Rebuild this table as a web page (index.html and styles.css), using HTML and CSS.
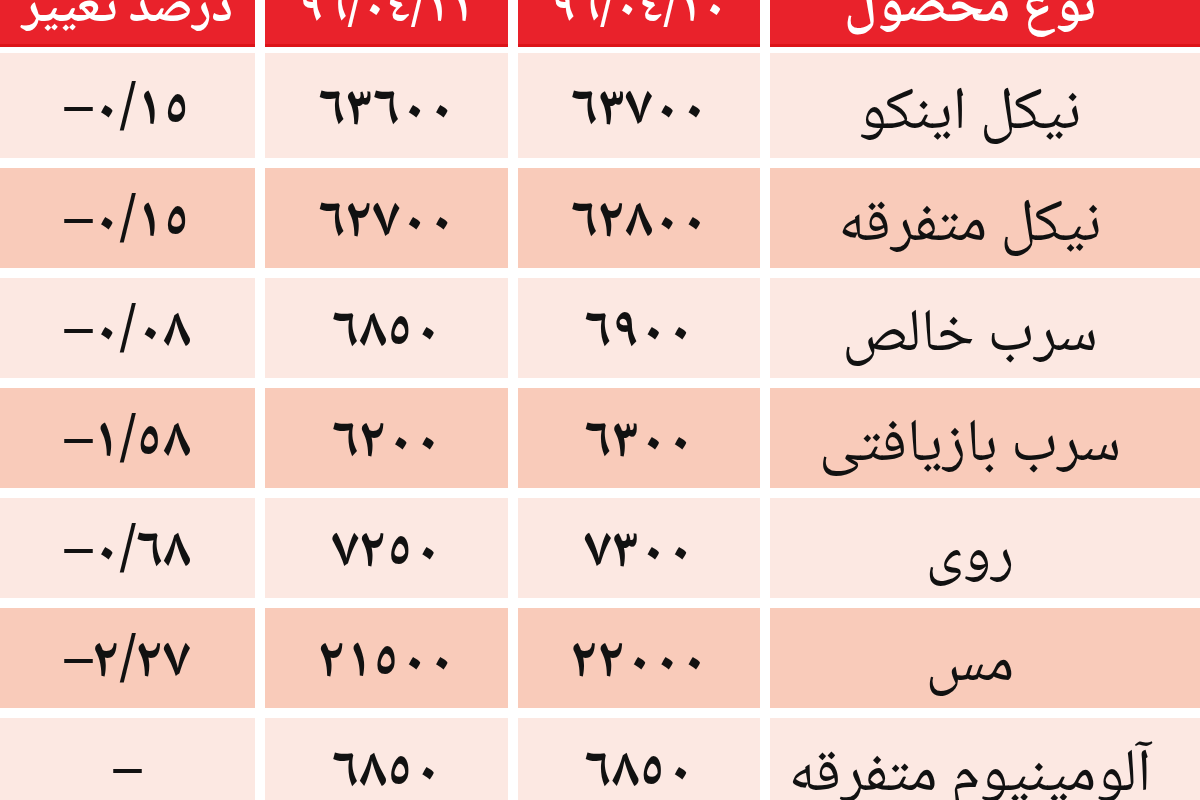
FILE: index.html
```html
<!DOCTYPE html>
<html lang="fa" dir="rtl">
<head>
<meta charset="utf-8">
<title>قیمت فلزات</title>
<link rel="stylesheet" href="styles.css">
</head>
<body>
<div class="table">
  <div class="row head">
    <div class="cell name">نوع محصول</div>
    <div class="cell num">٩٦/٠٤/١٠</div>
    <div class="cell num">٩٦/٠٤/١١</div>
    <div class="cell">درصد تغییر</div>
  </div>
  <div class="row light first">
    <div class="cell name">نیکل اینکو</div>
    <div class="cell num">٦٣٧٠٠</div>
    <div class="cell num">٦٣٦٠٠</div>
    <div class="cell num">–٠/١٥</div>
  </div>
  <div class="row dark">
    <div class="cell name">نیکل متفرقه</div>
    <div class="cell num">٦٢٨٠٠</div>
    <div class="cell num">٦٢٧٠٠</div>
    <div class="cell num">–٠/١٥</div>
  </div>
  <div class="row light">
    <div class="cell name">سرب خالص</div>
    <div class="cell num">٦٩٠٠</div>
    <div class="cell num">٦٨٥٠</div>
    <div class="cell num">–٠/٠٨</div>
  </div>
  <div class="row dark">
    <div class="cell name">سرب بازیافتی</div>
    <div class="cell num">٦٣٠٠</div>
    <div class="cell num">٦٢٠٠</div>
    <div class="cell num">–١/٥٨</div>
  </div>
  <div class="row light">
    <div class="cell name">روی</div>
    <div class="cell num">٧٣٠٠</div>
    <div class="cell num">٧٢٥٠</div>
    <div class="cell num">–٠/٦٨</div>
  </div>
  <div class="row dark">
    <div class="cell name">مس</div>
    <div class="cell num">٢٢٠٠٠</div>
    <div class="cell num">٢١٥٠٠</div>
    <div class="cell num">–٢/٢٧</div>
  </div>
  <div class="row light">
    <div class="cell name">آلومینیوم متفرقه</div>
    <div class="cell num">٦٨٥٠</div>
    <div class="cell num">٦٨٥٠</div>
    <div class="cell num">–</div>
  </div>
</div>
</body>
</html>
```
FILE: styles.css
```css
html, body {
  margin: 0;
  padding: 0;
  background: #ffffff;
}
body {
  width: 1200px;
  height: 800px;
  overflow: hidden;
  font-family: "Noto Naskh Arabic", "Noto Sans Arabic", "DejaVu Sans", sans-serif;
  color: #111111;
}
.table {
  display: flex;
  flex-direction: column;
  gap: 10px;
}
.row {
  display: grid;
  grid-template-columns: 430px 242px 243px 255px;
  column-gap: 10px;
  height: 100px;
}
.row.first {
  height: 105px;
}
.cell {
  display: flex;
  align-items: center;
  justify-content: center;
  font-size: 56px;
  line-height: 1;
  font-weight: bold;
  white-space: nowrap;
}
.cell.num {
  direction: ltr;
  padding-top: 12px;
}
.cell.name {
  padding-right: 30px;
  padding-top: 18px;
  font-weight: normal;
  font-size: 60px;
}
.head {
  height: 47px;
  margin-bottom: -4px;
}
.head .cell {
  overflow: hidden;
  background: #e9222b;
  color: #ffffff;
  align-items: flex-end;
  padding-top: 0;
  padding-bottom: 11px;
  font-size: 50px;
  font-weight: bold;
  box-shadow: inset 0 -3px 0 #dc1419;
}
.head .cell.name {
  padding-top: 0;
  font-weight: bold;
  font-size: 54px;
}
.light .cell {
  background: #fce8e2;
}
.dark .cell {
  background: #f9cbba;
}
```
